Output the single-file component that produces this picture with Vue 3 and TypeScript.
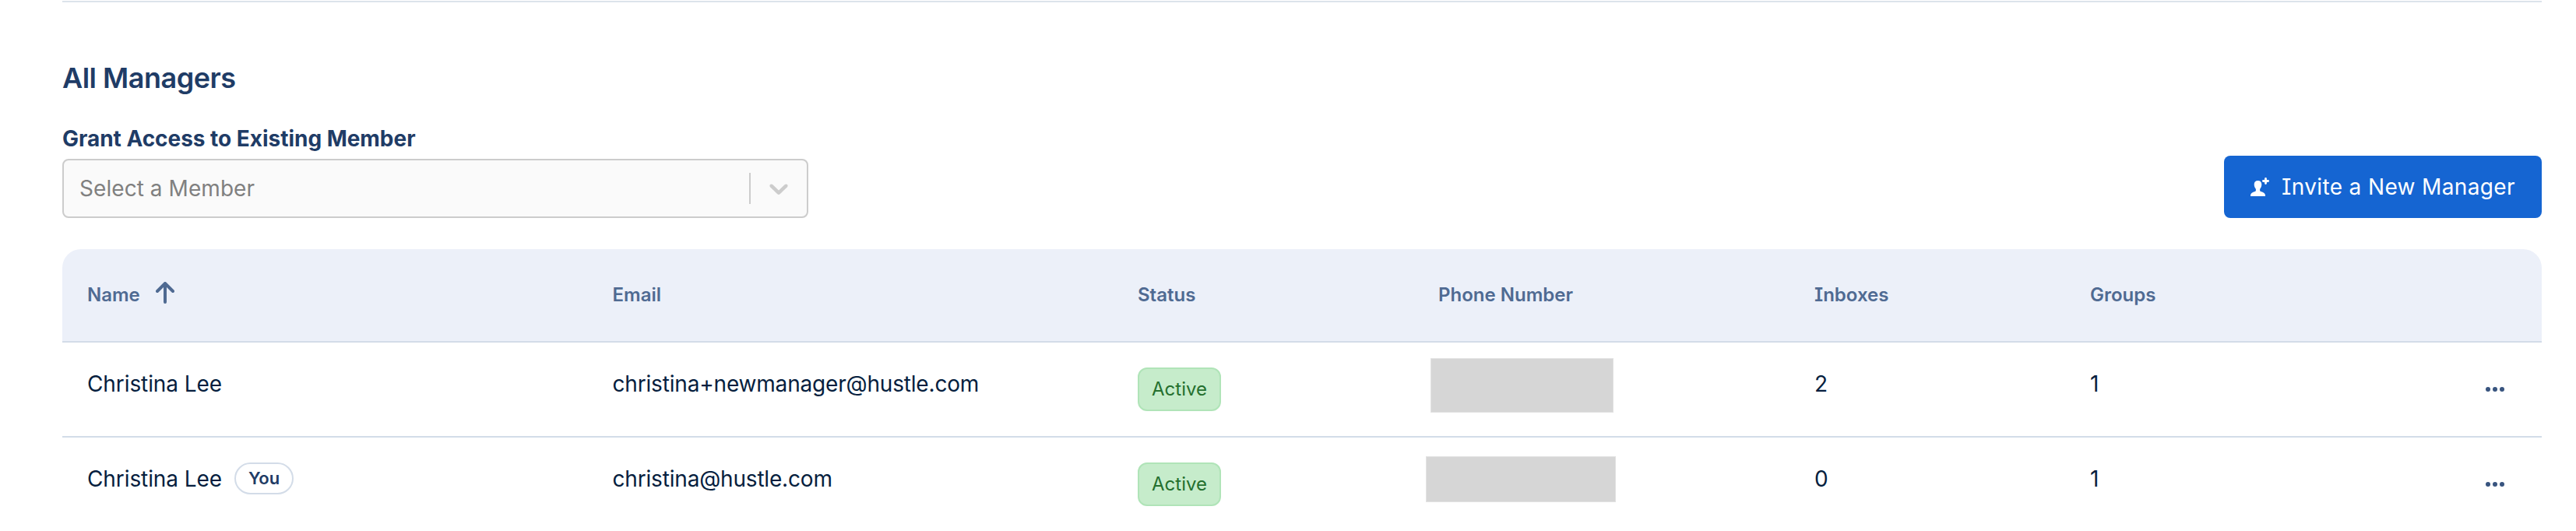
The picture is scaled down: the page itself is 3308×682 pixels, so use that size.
<script setup lang="ts">
interface Manager {
  id: number
  name: string
  email: string
  status: string
  inboxes: number
  groups: number
  isYou: boolean
  redaction: string
}

const managers: Manager[] = [
  { id: 1, name: 'Christina Lee', email: 'christina+newmanager@hustle.com', status: 'Active', inboxes: 2, groups: 1, isYou: false, redaction: 'tall' },
  { id: 2, name: 'Christina Lee', email: 'christina@hustle.com', status: 'Active', inboxes: 0, groups: 1, isYou: true, redaction: 'wide' },
]
</script>

<template>
  <main class="page">
    <hr class="divider" />
    <h2 class="title">All Managers</h2>

    <section class="toolbar">
      <div class="field">
        <label class="label">Grant Access to Existing Member</label>
        <div class="select">
          <span class="placeholder">Select a Member</span>
          <span class="separator"></span>
          <svg class="chevron" width="40" height="40" viewBox="0 0 20 20" fill="currentColor">
            <path d="M4.516 7.548c0.436-0.446 1.043-0.481 1.576 0l3.908 3.747 3.908-3.747c0.533-0.481 1.141-0.446 1.574 0 0.436 0.445 0.408 1.197 0 1.615-0.406 0.418-4.695 4.502-4.695 4.502-0.217 0.223-0.502 0.335-0.787 0.335s-0.57-0.112-0.789-0.335c0 0-4.287-4.084-4.695-4.502s-0.436-1.17 0-1.615z" />
          </svg>
        </div>
      </div>
      <button class="invite" type="button">
        <svg class="invite-icon" width="24" height="24" viewBox="0 0 24 24" fill="currentColor">
          <path d="M9.5 4C6.6 4 4.700 6 4.700 8.800c0 2.400.8 4.600 2.200 5.900v1.900c0 .9-.5 1.200-1.300 1.500C2.600 19.200.2 20.200 0 22.800V24h19v-1.200c-.2-2.600-2.600-3.600-5.600-4.700-.8-.3-1.300-.6-1.300-1.500v-1.900c1.400-1.300 2.200-3.500 2.200-5.900C14.300 6 12.400 4 9.500 4z" />
          <path d="M19.500 1.400v6.200M16.400 4.500h6.200" fill="none" stroke="currentColor" stroke-width="2.800" stroke-linecap="round" />
        </svg>
        <span>Invite a New Manager</span>
      </button>
    </section>

    <section class="table">
      <div class="row head">
        <div class="cell name">
          Name
          <svg class="sort" width="24" height="28" viewBox="0 0 24 28" fill="none" stroke="currentColor" stroke-width="4" stroke-linecap="round" stroke-linejoin="round">
            <path d="M12 26V2M2 12L12 2l10 10" />
          </svg>
        </div>
        <div class="cell">Email</div>
        <div class="cell">Status</div>
        <div class="cell">Phone Number</div>
        <div class="cell">Inboxes</div>
        <div class="cell">Groups</div>
        <div class="cell"></div>
      </div>
      <div v-for="m in managers" :key="m.id" class="row body">
        <div class="cell name">
          {{ m.name }}
          <span v-if="m.isYou" class="you">You</span>
        </div>
        <div class="cell email">{{ m.email }}</div>
        <div class="cell"><span class="badge">{{ m.status }}</span></div>
        <div class="cell"><span class="redaction" :class="m.redaction"></span></div>
        <div class="cell">{{ m.inboxes }}</div>
        <div class="cell">{{ m.groups }}</div>
        <div class="cell actions"><i></i><i></i><i></i></div>
      </div>
    </section>
  </main>
</template>

<style>
body {
  background: #fff;
}
</style>

<style scoped>
.page {
  box-sizing: border-box;
  height: 682px;
  overflow: hidden;
  padding: 1px 44px 0 80px;
  font-family: Inter, "Liberation Sans", sans-serif;
  font-feature-settings: "cv08";
  color: #061e3e;
}
.divider {
  height: 2px;
  margin: 0;
  border: 0;
  background: #dce3eb;
}
.title {
  margin: 73px 0 0;
  font-size: 36px;
  line-height: 48px;
  font-weight: 600;
  letter-spacing: -0.5px;
  color: #1f3c66;
}
.toolbar {
  display: flex;
  justify-content: space-between;
  align-items: flex-end;
  margin-top: 34px;
}
.field {
  width: 958px;
}
.label {
  display: block;
  margin-bottom: 6px;
  font-size: 28px;
  line-height: 40px;
  font-weight: 700;
  letter-spacing: -0.03px;
  color: #1f3c66;
}
.select {
  box-sizing: border-box;
  display: flex;
  align-items: center;
  height: 76px;
  padding: 0 16px 0 20px;
  border: 2px solid #ccc;
  border-radius: 8px;
  background: #fafafa;
}
.placeholder {
  flex: 1;
  font-size: 28px;
  line-height: 40px;
  letter-spacing: 0.06px;
  color: #808080;
}
.separator {
  width: 2px;
  height: 40px;
  background: #ccc;
}
.chevron {
  margin-left: 16px;
  color: #ccc;
}
.invite {
  display: flex;
  align-items: center;
  width: 408px;
  height: 80px;
  padding: 0 0 0 34px;
  border: 0;
  border-radius: 8px;
  background: #1565d2;
  color: #fff;
  font: 400 28px/40px Inter, "Liberation Sans", sans-serif;
  font-feature-settings: inherit;
  letter-spacing: 0.36px;
  white-space: nowrap;
}
.invite-icon {
  margin-right: 16px;
}
.table {
  margin-top: 40px;
}
.row {
  display: grid;
  grid-template-columns: 674.5px 674.5px 386px 483px 354px 500px 112px;
  box-sizing: border-box;
}
.cell {
  padding-left: 32px;
}
.head {
  height: 120px;
  padding-top: 41px;
  border-bottom: 2px solid #d3dce8;
  border-radius: 24px 24px 0 0;
  background: #ecf0f9;
  color: #4f6a92;
  font-size: 24px;
  line-height: 36px;
  font-weight: 600;
}
.body {
  height: 122px;
  padding-top: 33px;
  border-bottom: 2px solid #d3dce8;
  font-size: 28px;
  line-height: 40px;
}
.body:last-child {
  border-bottom: 0;
}
.name {
  display: flex;
  align-items: flex-start;
}
.body .name {
  letter-spacing: -0.09px;
}
.email {
  letter-spacing: -0.18px;
}
.sort {
  margin: 1px 0 0 20px;
}
.you {
  box-sizing: border-box;
  width: 76px;
  height: 41px;
  margin: -1px 0 0 16px;
  border: 2px solid #d3dce8;
  border-radius: 21px;
  color: #1f3c66;
  font-size: 22px;
  line-height: 36px;
  font-weight: 600;
  text-align: center;
}
.badge {
  box-sizing: border-box;
  display: block;
  width: 107px;
  height: 56px;
  margin-top: -1px;
  border: 2px solid #b0e4b8;
  border-radius: 12px;
  background: #c6eccb;
  color: #25702f;
  font-size: 24px;
  line-height: 52px;
  text-align: center;
}
.redaction {
  display: block;
  box-sizing: border-box;
  border: 1px solid #e2e2e2;
  background: #d6d6d6;
}
.tall {
  width: 235px;
  height: 70px;
  margin: -13px 0 0 -10px;
}
.wide {
  width: 244px;
  height: 59px;
  margin: -9px 0 0 -16px;
}
.actions {
  display: flex;
  gap: 3px;
  padding: 24px 0 0 40px;
}
.actions i {
  width: 6px;
  height: 6px;
  border-radius: 50%;
  background: #38547f;
}
</style>
